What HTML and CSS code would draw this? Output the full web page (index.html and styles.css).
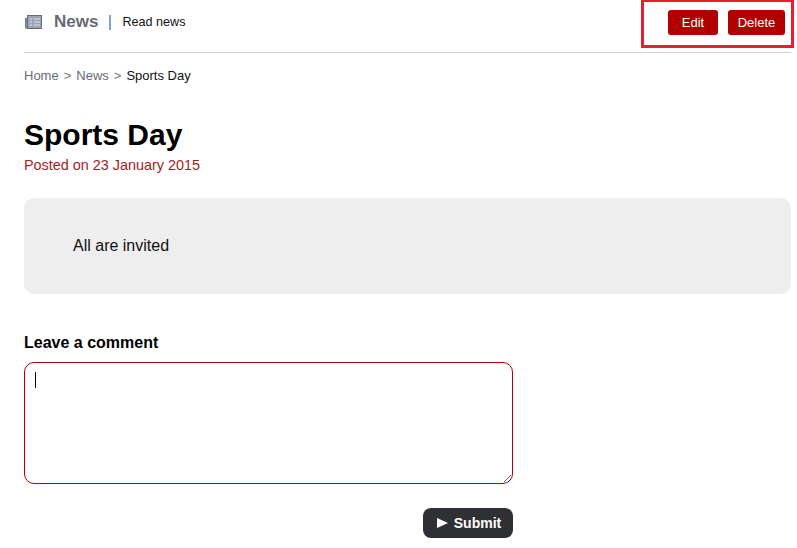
FILE: index.html
```html
<!DOCTYPE html>
<html lang="en">
<head>
  <meta charset="UTF-8" />
  <title>Sports Day</title>
  <link rel="stylesheet" href="styles.css">
</head>
<body>
  <div class="container">
    <div class="topbar">
      <div class="page-title">
        <svg class="news-icon" width="17" height="14" viewBox="0 0 17 14">
          <path d="M0.500 3.500h2v10h-1a1 1 0 0 1-1-1z" fill="#8b95a3" stroke="#6b7280"/>
          <rect x="2.500" y="0.500" width="14" height="13" fill="#9aa3b0" stroke="#666d78"/>
          <path d="M4.500 4h2.500M4.500 7h2.500M4.500 10h2.500M8.500 4h6.500M8.500 7h6.500M8.500 10h6.500" stroke="#dfe3e8" fill="none"/>
        </svg>
        <span class="section">News</span>
        <span class="divider"></span>
        <span class="subtitle">Read news</span>
      </div>
      <div class="actions">
        <a class="btn">Edit</a>
        <a class="btn">Delete</a>
      </div>
    </div>

    <div class="crumbs">
      <a>Home</a><span class="sep">&gt;</span><a>News</a><span class="sep">&gt;</span><span class="current">Sports Day</span>
    </div>

    <h1>Sports Day</h1>
    <div class="posted">Posted on 23 January 2015</div>

    <div class="article">All are invited</div>

    <form class="comment-form">
      <label class="comment-label" for="comment">Leave a comment</label>
      <div class="comment-wrap">
        <textarea id="comment" class="comment-box"></textarea>
        <span class="caret"></span>
      </div>
      <div class="submit-row">
        <button type="button" class="submit"><span class="arrow"></span>Submit</button>
      </div>
    </form>
  </div>

  <div class="highlight"></div>
</body>
</html>
```

FILE: styles.css
```css
body {
  margin: 0;
  background: #fff;
  font-family: "Liberation Sans", Arial, sans-serif;
  color: #000;
}
.container {
  padding-left: 24px;
  padding-right: 6px;
}
.topbar {
  display: flex;
  justify-content: space-between;
  align-items: center;
  height: 44px;
  padding-right: 6px;
  padding-bottom: 8px;
  border-bottom: 1px solid #d3d3d3;
}
.page-title {
  display: flex;
  align-items: center;
}
.news-icon {
  margin-left: 1px;
  margin-right: 12px;
}
.section {
  font-size: 17px;
  font-weight: bold;
  color: #666b73;
}
.divider {
  width: 2px;
  height: 15px;
  background: #7fa3cf;
  margin: 0 11px;
}
.subtitle {
  font-size: 12.6px;
  color: #111;
}
.actions {
  display: flex;
  gap: 10px;
}
.btn {
  background: #b00000;
  color: #fff;
  font-size: 13px;
  width: 50px;
  height: 25px;
  line-height: 25px;
  text-align: center;
  border-radius: 3px;
}
.btn + .btn {
  width: 57px;
}
.crumbs {
  margin-top: 15px;
  font-size: 13px;
  line-height: 16px;
  color: #666b73;
}
.sep {
  margin: 0 5px;
  color: #777;
}
.current {
  color: #111;
}
h1 {
  margin: 34px 0 0;
  font-size: 30px;
  line-height: 34px;
  font-weight: bold;
}
.posted {
  margin-top: 5px;
  font-size: 14.4px;
  line-height: 16px;
  color: #a51c24;
}
.article {
  margin-top: 25px;
  height: 96px;
  line-height: 96px;
  padding-left: 49px;
  background: #eeeeee;
  border-radius: 10px;
  font-size: 16px;
  color: #111;
}
.comment-form {
  margin-top: 40px;
  width: 489px;
}
.comment-label {
  display: block;
  font-size: 16px;
  line-height: 18px;
  font-weight: bold;
}
.comment-wrap {
  position: relative;
  margin-top: 10px;
}
.comment-box {
  display: block;
  box-sizing: border-box;
  width: 489px;
  height: 122px;
  border: 1px solid #b00000;
  border-radius: 10px;
  outline: none;
  background: #fff;
}
.caret {
  position: absolute;
  left: 11px;
  top: 10px;
  width: 1px;
  height: 16px;
  background: #000;
}
.submit-row {
  display: flex;
  justify-content: flex-end;
  margin-top: 24px;
}
.submit {
  width: 90px;
  height: 30px;
  border: none;
  border-radius: 8px;
  background: #2f3033;
  color: #fff;
  font-family: "Liberation Sans", Arial, sans-serif;
  font-size: 14px;
  font-weight: bold;
  padding: 0 0 0 2px;
}
.arrow {
  display: inline-block;
  border-left: 11px solid #fff;
  border-top: 5px solid transparent;
  border-bottom: 5px solid transparent;
  margin-right: 6px;
}
.highlight {
  position: absolute;
  left: 641px;
  top: -1px;
  width: 147px;
  height: 43px;
  border: 3px solid #ed1c2e;
}
```
